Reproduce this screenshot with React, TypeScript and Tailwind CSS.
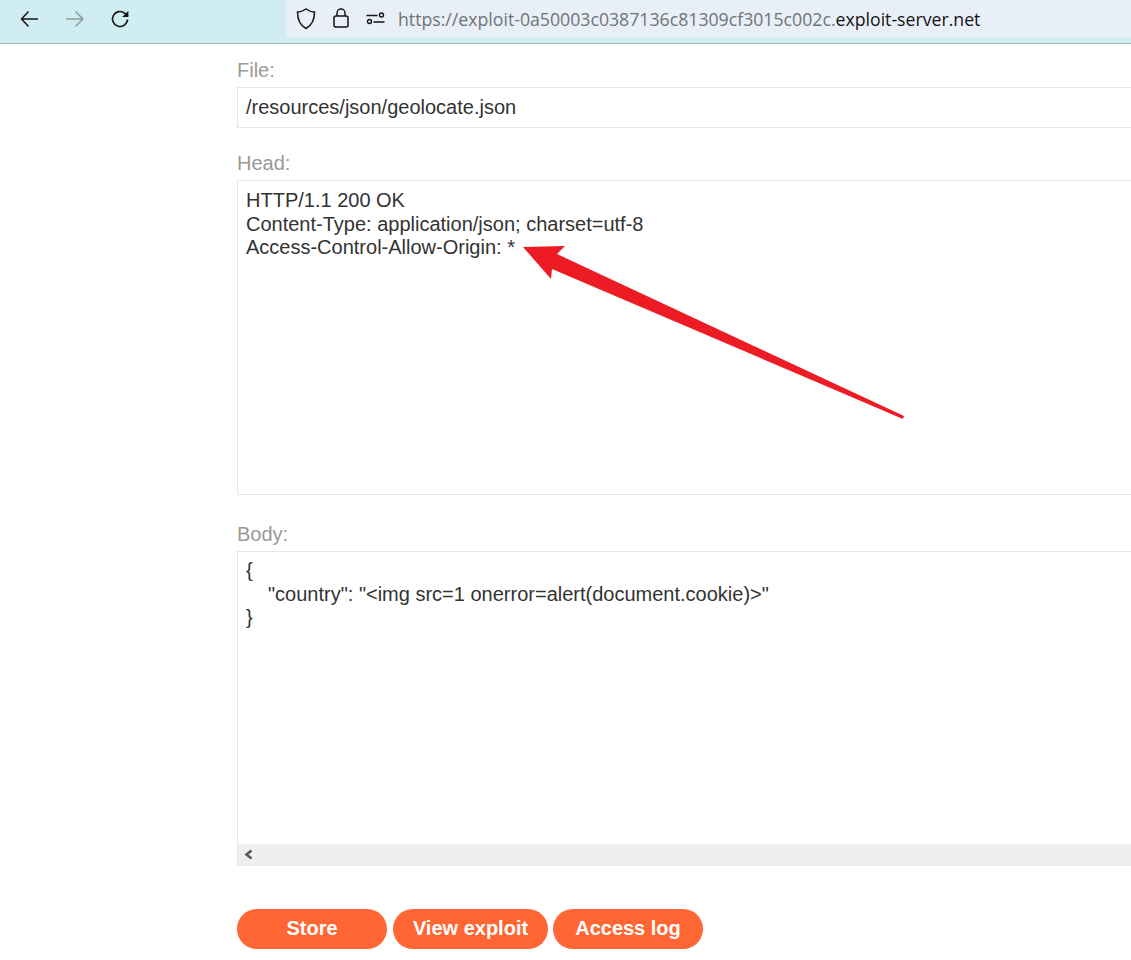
import React from 'react';

const sans = 'font-["Liberation_Sans",Arial,sans-serif]';

const Toolbar = () => (
  <div className="flex h-[44px] items-start border-b border-[#9fb4b8] bg-[#d0eef2]">
    <div className="flex h-[38px] w-[286px] shrink-0 items-center">
      <svg className="ml-[20px] h-[20px] w-[20px]" viewBox="0 0 20 20" fill="none" stroke="#15141a" strokeWidth="1.5">
        <path d="M18 10H1.500M8.500 2.500L1.500 10l7 7.500" />
      </svg>
      <svg className="ml-[25px] h-[20px] w-[20px]" viewBox="0 0 20 20" fill="none" stroke="#8e9da0" strokeWidth="1.5">
        <path d="M1 10h17M10.5 2.5L18 10l-7.5 7.5" />
      </svg>
      <svg className="ml-[25px] h-[20px] w-[20px]" viewBox="0 0 20 20" fill="none" stroke="#15141a" strokeWidth="1.6">
        <path d="M17.5 10.5a7.5 7.5 0 1 1-2.6-6.2L18 7" />
        <path d="M18.4 1.8V8h-6.2z" fill="#15141a" stroke="none" />
      </svg>
    </div>
    <div className="flex h-[38px] min-w-0 flex-1 items-center rounded-bl-[4px] bg-[#e8eff6]">
      <svg className="ml-[10px] h-[22px] w-[20px]" viewBox="0 0 20 22" fill="none" stroke="#15141a" strokeWidth="1.5">
        <path d="M10 1c2.500 1.800 5 2.800 8.500 3 0 7.500-2 13-8.500 16.500C3.500 17 1.500 11.500 1.500 4 5 3.800 7.500 2.800 10 1z" />
      </svg>
      <svg className="ml-[16px] h-[20px] w-[18px] overflow-visible" viewBox="0 0 18 20" fill="none" stroke="#15141a" strokeWidth="1.5">
        <rect x="2" y="7" width="14" height="11" rx="2" />
        <path d="M5 7V4a4 4 0 0 1 8 0v3" />
      </svg>
      <svg className="ml-[15px] h-[20px] w-[20px]" viewBox="0 0 20 20" fill="none" stroke="#15141a" strokeWidth="1.4">
        <path d="M1.500 6.500h11M8.500 13h11" />
        <circle cx="16.500" cy="6" r="2" />
        <circle cx="4.500" cy="12.500" r="2" />
      </svg>
      <span className='ml-[13px] whitespace-nowrap font-["Open_Sans",sans-serif] text-[17.7px] text-[#6f7479]'>
        https://exploit-0a50003c0387136c81309cf3015c002c.<span className="text-[#15141a]">exploit-server.net</span>
      </span>
    </div>
  </div>
);

const Field = ({ label, boxClass, children }: { label: string; boxClass: string; children: React.ReactNode }) => (
  <div>
    <div className="text-[20px] leading-[23px] text-[#999]">{label}</div>
    <div className={`mt-[5px] overflow-hidden border border-r-0 border-[#e6e6e6] bg-white text-[20px] leading-[23.5px] text-[#333] ${boxClass}`}>
      {children}
    </div>
  </div>
);

const OrangeButton = ({ label, width }: { label: string; width: string }) => (
  <button className={`h-[40px] rounded-[20px] bg-[#ff6633] pb-[2px] text-[20px] font-bold text-white ${width}`}>{label}</button>
);

export default function App() {
  return (
    <div className={`relative h-[960px] overflow-hidden bg-white ${sans}`}>
      <Toolbar />
      <div className="pl-[237px] pt-[15px]">
        <Field label="File:" boxClass="h-[41px] px-[8px] py-[8px]">
          /resources/json/geolocate.json
        </Field>
        <div className="mt-[24px]">
          <Field label="Head:" boxClass="h-[315px] px-[8px] pt-[8.400px]">
            <div>HTTP/1.1 200 OK</div>
            <div>Content-Type: application/json; charset=utf-8</div>
            <div>Access-Control-Allow-Origin: *</div>
          </Field>
        </div>
        <div className="mt-[28px]">
          <Field label="Body:" boxClass="flex h-[315px] flex-col">
            <div className="flex-1 px-[8px] pt-[7.400px]">
              <div>{'{'}</div>
              <div className="pl-[22px]">"country": "&lt;img src=1 onerror=alert(document.cookie)&gt;"</div>
              <div>{'}'}</div>
            </div>
            <div className="flex h-[21px] items-center bg-[#efefef] pl-[6px]">
              <svg className="h-[11px] w-[9px]" viewBox="0 0 9 11" fill="none" stroke="#555" strokeWidth="2.500">
                <path d="M7.500 1.500L2.500 5.500l5 4" />
              </svg>
            </div>
          </Field>
        </div>
        <div className="mt-[43px] flex gap-[5px]">
          <OrangeButton label="Store" width="w-[150px] mr-[1px]" />
          <OrangeButton label="View exploit" width="w-[155px]" />
          <OrangeButton label="Access log" width="w-[150px]" />
        </div>
      </div>
      {/* annotation arrow drawn over the form */}
      <svg className="absolute left-0 top-0 h-[960px] w-[1131px]" viewBox="0 0 1131 960">
        <path d="M523 247L565 246L557 254L904 416L903 419L552 269L551 279Z" fill="#ed1c24" />
      </svg>
    </div>
  );
}
